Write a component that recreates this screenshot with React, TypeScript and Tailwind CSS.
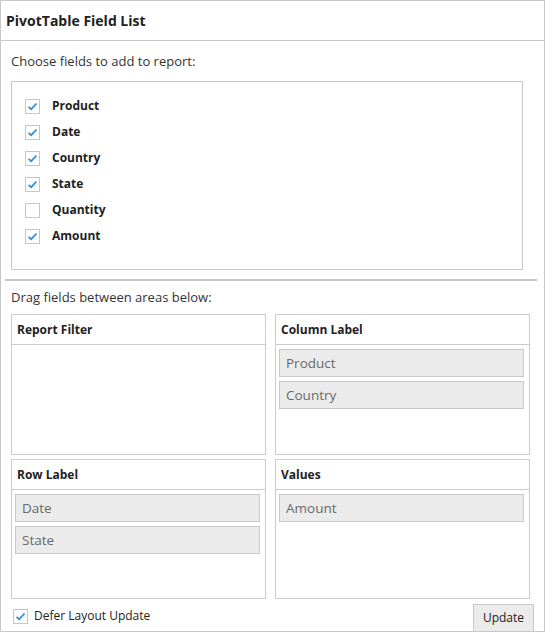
import React from 'react';

const font = { fontFamily: '"Open Sans", "Noto Sans", sans-serif' };

function Check({ checked }: { checked: boolean }) {
  return (
    <span className="w-[15px] h-[15px] border border-[#c6c6c6] bg-white flex items-center justify-center shrink-0">
      {checked && (
        <svg width="11" height="9" viewBox="0 0 11 9">
          <path d="M1.5 4.8 L4.2 7.2 L9.5 1.5" fill="none" stroke="#2f8fdd" strokeWidth="1.8" />
        </svg>
      )}
    </span>
  );
}

function Chip({ label }: { label: string }) {
  return (
    <div className="h-[28px] border border-[#c9c9c9] bg-[#ebebeb] flex items-center px-[6px] text-[13.5px] text-[#6a6a6a]">
      {label}
    </div>
  );
}

function Area({ title, items }: { title: string; items: string[] }) {
  return (
    <div className="border border-[#cbcbcb] flex flex-col">
      <div className="h-[30px] border-b border-[#cbcbcb] flex items-center px-[5px] text-[12px] font-bold text-[#222]">
        {title}
      </div>
      <div className="flex flex-col gap-[4px] pl-[3px] pr-[5px] pt-[4px]">
        {items.map((i) => (
          <Chip key={i} label={i} />
        ))}
      </div>
    </div>
  );
}

export default function App() {
  const fields = [
    { name: 'Product', on: true },
    { name: 'Date', on: true },
    { name: 'Country', on: true },
    { name: 'State', on: true },
    { name: 'Quantity', on: false },
    { name: 'Amount', on: true },
  ];

  return (
    <div style={font} className="w-[545px] h-[632px] border border-[#c8c8c8] bg-white flex flex-col text-[#333]">
      {/* Header */}
      <div className="h-[40px] shrink-0 border-b border-[#c8c8c8] flex items-center px-[5px] text-[14px] font-bold text-[#222]">
        PivotTable Field List
      </div>

      <div className="h-[40px] shrink-0 flex items-center pt-[2px] px-[10px] text-[13px] text-[#333]">
        Choose fields to add to report:
      </div>

      {/* Field list */}
      <div className="ml-[10px] w-[512px] h-[189px] shrink-0 border border-[#c8c8c8] pt-[11px] pl-[13px]">
        {fields.map((f) => (
          <div key={f.name} className="h-[26px] flex items-center gap-[12px]">
            <Check checked={f.on} />
            <span className="text-[12px] font-bold text-[#222]">{f.name}</span>
          </div>
        ))}
      </div>

      <div className="mt-[9px] ml-[4px] w-[532px] h-[2px] shrink-0 bg-[#c8c8c8]" />

      <div className="h-[33px] shrink-0 flex items-center px-[10px] text-[13px] text-[#333]">
        Drag fields between areas below:
      </div>

      {/* Areas */}
      <div className="ml-[10px] w-[519px] grid grid-cols-2 grid-rows-[141px_140px] gap-x-[9px] gap-y-[4px] shrink-0">
        <Area title="Report Filter" items={[]} />
        <Area title="Column Label" items={['Product', 'Country']} />
        <Area title="Row Label" items={['Date', 'State']} />
        <Area title="Values" items={['Amount']} />
      </div>

      {/* Footer */}
      <div className="flex-1 flex items-end justify-between pl-[12px] pr-[10px]">
        <div className="flex items-center gap-[6px] self-center mt-[2px]">
          <Check checked />
          <span className="text-[12px] text-[#222]">Defer Layout Update</span>
        </div>
        <button className="w-[61px] h-[27px] border border-[#c8c8c8] border-b-0 bg-[#ebebeb] text-[12px] text-[#222]">
          Update
        </button>
      </div>
    </div>
  );
}
